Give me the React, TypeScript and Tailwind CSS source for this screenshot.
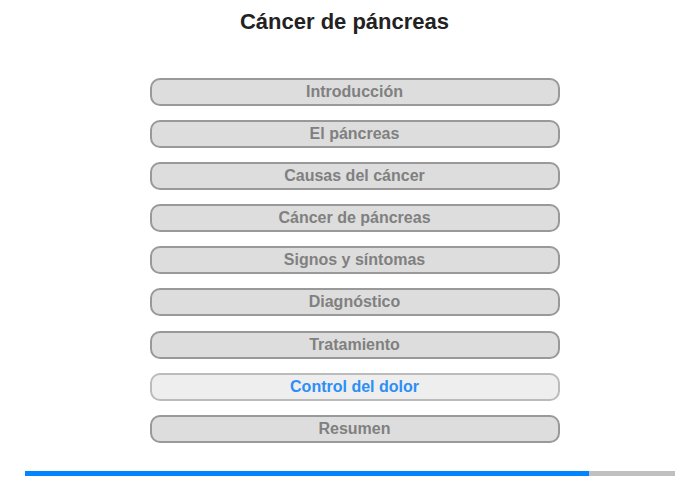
const ITEMS = [
  'Introducción',
  'El páncreas',
  'Causas del cáncer',
  'Cáncer de páncreas',
  'Signos y síntomas',
  'Diagnóstico',
  'Tratamiento',
  'Control del dolor',
  'Resumen',
]

const ACTIVE = 'Control del dolor'

export default function App() {
  return (
    <div className="w-[700px] h-[480px] bg-white font-['Liberation_Sans',Arial,sans-serif] flex flex-col items-center">
      <h1 className="mt-[9px] mr-[11px] text-[22px] leading-[26px] font-bold text-[#222]">Cáncer de páncreas</h1>

      <div className="mt-[43px] ml-[9px] flex flex-col gap-[14.1px] w-[410px]">
        {ITEMS.map((label) => {
          const active = label === ACTIVE
          return (
            <button
              key={label}
              className={
                active
                  ? 'h-[28px] w-full rounded-[10px] border-2 border-[#bbb] bg-[#eee] text-[16px] font-bold leading-none text-[#2d8ef5]'
                  : 'h-[28px] w-full rounded-[10px] border-2 border-[#999] bg-[#ddd] text-[16px] font-bold leading-none text-[#808080]'
              }
            >
              {label}
            </button>
          )
        })}
      </div>

      <div className="mt-[28px] flex w-[650px] h-[5px]">
        <div className="w-[564px] bg-[#0084ff]" />
        <div className="flex-1 bg-[#c0c0c0]" />
      </div>
    </div>
  )
}
